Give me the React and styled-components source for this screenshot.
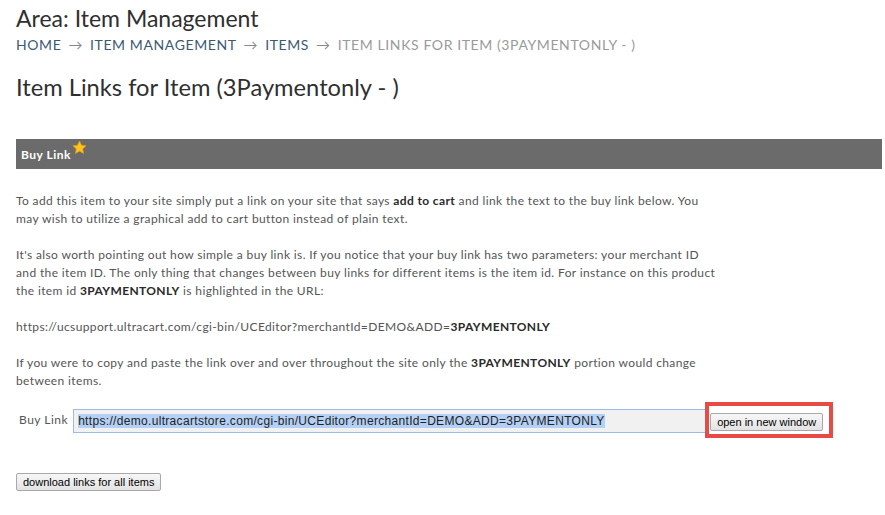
import React from 'react'
import styled, { createGlobalStyle } from 'styled-components'

const GlobalStyle = createGlobalStyle`
  html, body {
    margin: 0;
    padding: 0;
    background: #ffffff;
  }
  body {
    font-family: Lato, "Open Sans", sans-serif;
  }
`

const Page = styled.div`
  padding: 4px 3px 0 16px;
  width: 885px;
  box-sizing: border-box;
`

const AreaTitle = styled.h1`
  margin: 0;
  font-size: 23px;
  font-weight: 400;
  color: #2f2f2f;
  line-height: 28px;
`

const Crumbs = styled.div`
  display: flex;
  gap: 7px;
  margin-top: 4px;
  font-size: 14px;
  letter-spacing: 0.6px;
  line-height: 18px;
`

const Crumb = styled.span`
  color: ${(p) => (p.current ? '#9a9a9a' : '#3c5973')};
`

const Arrow = styled.span`
  color: #888;
`

const PageTitle = styled.h2`
  margin: 19px 0 0;
  font-size: 23.7px;
  font-weight: 400;
  color: #2f2f2f;
  line-height: 28px;
`

const SectionBar = styled.div`
  margin-top: 38px;
  height: 30px;
  background: #6b6b6b;
  display: flex;
  align-items: flex-start;
  padding-left: 5px;
`

const SectionLabel = styled.span`
  margin-top: 8px;
  color: #ffffff;
  font-weight: 700;
  font-size: 12px;
  letter-spacing: 0.5px;
`

const Body = styled.div`
  width: 705px;
  margin-top: 23px;
  font-size: 12px;
  letter-spacing: 0.37px;
  line-height: 18px;
  color: #555555;
`

const Para = styled.p`
  margin: 0 0 18px;
`

const Strong = styled.b`
  font-weight: 700;
  color: #2a2a2a;
`

const LinkRow = styled.div`
  display: flex;
  align-items: flex-start;
  margin-top: 15px;
`

const RowLabel = styled.span`
  font-size: 12px;
  letter-spacing: 0.5px;
  color: #555;
  margin: 4px 5px 0 3px;
`

const UrlBox = styled.div`
  margin-top: 1px;
  width: 634px;
  height: 24px;
  box-sizing: border-box;
  border: 1px solid #9dbaea;
  background: #f1f1f1;
  display: flex;
  align-items: center;
  padding-left: 4px;
  font-family: "Liberation Sans", Arial, sans-serif;
  font-size: 12px;
  letter-spacing: 0.32px;
  color: #222;
  overflow: hidden;
  white-space: nowrap;
`

const Selected = styled.span`
  background: #b4d0f5;
`

const Highlight = styled.div`
  margin-left: -2px;
  margin-top: -6px;
  border: 4px solid #e84a45;
  padding: 7px 6px 3px 1px;
`

const Button = styled.button`
  font-family: "Liberation Sans", Arial, sans-serif;
  font-size: 11px;
  color: #000;
  height: 18px;
  padding: 0 6px;
  border: 1px solid #a9a9a9;
  border-radius: 2px;
  background: linear-gradient(#f7f7f7, #e3e3e3);
  display: flex;
  align-items: center;
  cursor: pointer;
`

const Footer = styled.div`
  margin-top: 35px;
`

const Star = () => (
  <svg width="15" height="15" viewBox="0 0 24 24" style={{ marginTop: 1, marginLeft: 1 }}>
    <path
      d="M12 1.5l3.2 6.9 7.3.8-5.4 5 1.5 7.3L12 17.8l-6.6 3.7 1.5-7.3-5.4-5 7.3-.8z"
      fill="#ffc41f"
      stroke="#e59a0c"
      strokeWidth="1.2"
      strokeLinejoin="round"
    />
  </svg>
)

export default function App() {
  return (
    <Page>
      <GlobalStyle />
      <AreaTitle>Area: Item Management</AreaTitle>
      <Crumbs>
        <Crumb>HOME</Crumb>
        <Arrow>→</Arrow>
        <Crumb>ITEM MANAGEMENT</Crumb>
        <Arrow>→</Arrow>
        <Crumb>ITEMS</Crumb>
        <Arrow>→</Arrow>
        <Crumb current>ITEM LINKS FOR ITEM (3PAYMENTONLY - )</Crumb>
      </Crumbs>
      <PageTitle>Item Links for Item (3Paymentonly - )</PageTitle>

      <SectionBar>
        <SectionLabel>Buy Link</SectionLabel>
        <Star />
      </SectionBar>

      <Body>
        <Para>
          To add this item to your site simply put a link on your site that says <Strong>add to cart</Strong> and
          link the text to the buy link below. You may wish to utilize a graphical add to cart button instead of
          plain text.
        </Para>
        <Para>
          It's also worth pointing out how simple a buy link is. If you notice that your buy link has two
          parameters: your merchant ID and the item ID. The only thing that changes between buy links for
          different items is the item id. For instance on this product the item id <Strong>3PAYMENTONLY</Strong> is
          highlighted in the URL:
        </Para>
        <Para>
          https://ucsupport.ultracart.com/cgi-bin/UCEditor?merchantId=DEMO&amp;ADD=<Strong>3PAYMENTONLY</Strong>
        </Para>
        <Para>
          If you were to copy and paste the link over and over throughout the site only the{' '}
          <Strong>3PAYMENTONLY</Strong> portion would change between items.
        </Para>
      </Body>

      <LinkRow>
        <RowLabel>Buy Link</RowLabel>
        <UrlBox>
          <Selected>https://demo.ultracartstore.com/cgi-bin/UCEditor?merchantId=DEMO&amp;ADD=3PAYMENTONLY</Selected>
        </UrlBox>
        <Highlight>
          <Button>open in new window</Button>
        </Highlight>
      </LinkRow>

      <Footer>
        <Button>download links for all items</Button>
      </Footer>
    </Page>
  )
}
